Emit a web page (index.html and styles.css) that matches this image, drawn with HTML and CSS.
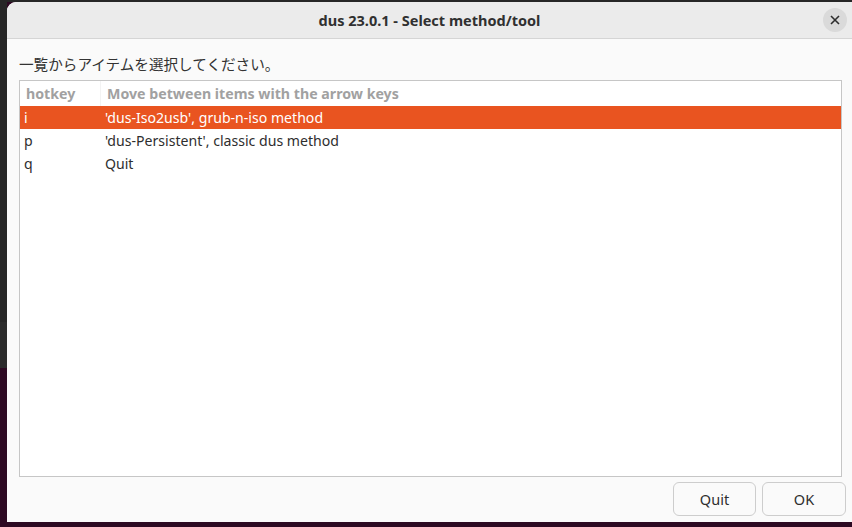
FILE: index.html
```html
<!DOCTYPE html>
<html>
<head>
<meta charset="utf-8">
<link rel="stylesheet" href="styles.css">
</head>
<body>
<div class="desktop">
  <div class="side">
    <div class="side-top"></div>
    <div class="side-mid"></div>
    <div class="side-term"></div>
  </div>
  <div class="dialog">
    <div class="titlebar">
      <span class="title">dus 23.0.1 - Select method/tool</span>
      <button class="close" aria-label="Close">
        <svg width="10" height="10" viewBox="0 0 10 10"><path d="M1 1L9 9M9 1L1 9" stroke="#2e2e2e" stroke-width="1.6" fill="none"/></svg>
      </button>
    </div>
    <div class="body">
      <div class="prompt">一覧からアイテムを選択してください。</div>
      <div class="list">
        <div class="row header">
          <div class="c1">hotkey</div>
          <div class="c2">Move between items with the arrow keys</div>
        </div>
        <div class="row selected">
          <div class="c1">i</div>
          <div class="c2">'dus-Iso2usb', grub-n-iso method</div>
        </div>
        <div class="row">
          <div class="c1">p</div>
          <div class="c2">'dus-Persistent', classic dus method</div>
        </div>
        <div class="row">
          <div class="c1">q</div>
          <div class="c2">Quit</div>
        </div>
      </div>
      <div class="buttons">
        <button class="btn quit">Quit</button>
        <button class="btn ok">OK</button>
      </div>
    </div>
  </div>
</div>
</body>
</html>
```
FILE: styles.css
```css
html, body {
  margin: 0;
  padding: 0;
  width: 852px;
  height: 527px;
  overflow: hidden;
}
body {
  background: #2d0922;
  font-family: "Noto Sans", "Noto Sans CJK JP", sans-serif;
}
.desktop {
  display: flex;
  width: 852px;
  height: 527px;
  background: linear-gradient(#262626 0, #262626 2px, #2d0922 2px);
}
.side {
  width: 7px;
  flex: none;
  display: flex;
  flex-direction: column;
}
.side-top { height: 322px; background: #262626; }
.side-mid { height: 46px; background: #2b2b2b; }
.side-term { flex: 1; background: #2d0922; }
.dialog {
  flex: 1;
  margin-top: 2px;
  height: 520px;
  display: flex;
  flex-direction: column;
  background: #fafafa;
  border-top-left-radius: 9px;
  overflow: hidden;
}
.titlebar {
  height: 36px;
  flex: none;
  background: #ebebeb;
  border-bottom: 1px solid #d5d5d5;
  display: flex;
  align-items: center;
  justify-content: center;
  position: relative;
}
.title {
  font-weight: bold;
  font-size: 14.5px;
  color: #303030;
}
.close {
  position: absolute;
  right: 5px;
  top: 6px;
  width: 24px;
  height: 24px;
  border-radius: 50%;
  border: none;
  background: #dadada;
  display: flex;
  align-items: center;
  justify-content: center;
  padding: 0;
}
.body {
  flex: 1;
  display: flex;
  flex-direction: column;
  padding: 14px 6px 7px 12px;
}
.prompt {
  font-size: 14.6px;
  color: #333;
  height: 27px;
  line-height: 22px;
}
.list {
  width: 821px;
  height: 395px;
  border: 1px solid #c6c6c6;
  background: #ffffff;
  flex: none;
}
.row {
  display: flex;
  height: 23px;
  line-height: 23px;
  font-size: 14.1px;
  color: #2e2e2e;
}
.row .c1 { width: 81px; padding-left: 4px; box-sizing: border-box; }
.row .c2 { flex: 1; padding-left: 4px; }
.row.header {
  height: 25px;
  line-height: 25px;
  color: #a1a1a1;
  font-weight: bold;
  font-size: 14.2px;
}
.row.header .c1 { padding-left: 6px; border-right: 1px solid #f3f3f3; }
.row.header .c2 { padding-left: 6px; }
.row.selected {
  background: #e95420;
  color: #ffffff;
}
.buttons {
  display: flex;
  justify-content: flex-end;
  gap: 6px;
  margin-top: 5px;
}
.btn {
  height: 34px;
  border: 1px solid #cdcdcd;
  border-radius: 6px;
  background: #fafafa;
  font-family: inherit;
  font-size: 14.5px;
  color: #2e2e2e;
  padding: 0;
}
.quit { width: 83px; }
.ok { width: 84px; }
```
